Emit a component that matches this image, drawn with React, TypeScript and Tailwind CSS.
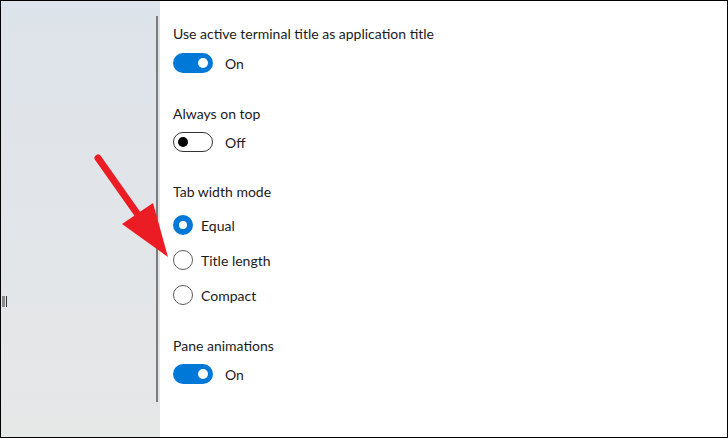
import React from 'react';

const font = { fontFamily: 'Lato, "Noto Sans", sans-serif' };

const Toggle = ({ on }: { on: boolean }) => (
  <div className="flex h-[20px] items-center">
    {on ? (
      <div className="flex h-[20px] w-[40px] items-center justify-end rounded-full bg-[#0078d7] pr-[5px]">
        <div className="h-[10px] w-[10px] rounded-full bg-white" />
      </div>
    ) : (
      <div className="flex h-[20px] w-[40px] items-center rounded-full border-[1.5px] border-[#333333] pl-[4px]">
        <div className="h-[10px] w-[10px] rounded-full bg-black" />
      </div>
    )}
    <span className="ml-[12px] text-[14px] text-[#1b1b1b]">{on ? 'On' : 'Off'}</span>
  </div>
);

const Radio = ({ label, checked }: { label: string; checked?: boolean }) => (
  <div className="flex h-[20px] items-center">
    {checked ? (
      <div className="flex h-[20px] w-[20px] items-center justify-center rounded-full bg-[#0078d7]">
        <div className="h-[8px] w-[8px] rounded-full bg-white" />
      </div>
    ) : (
      <div className="h-[20px] w-[20px] rounded-full border border-[#5a5a5a]" />
    )}
    <span className="ml-[8px] text-[14px] text-[#1b1b1b]">{label}</span>
  </div>
);

const Title = ({ children }: { children: React.ReactNode }) => (
  <div className="flex h-[20px] items-center text-[14px] text-[#1b1b1b]">{children}</div>
);

export default function App() {
  return (
    <div
      className="relative flex h-[438px] w-[728px] overflow-hidden border border-black bg-white"
      style={font}
    >
      {/* left nav strip */}
      <div className="flex w-[159px] shrink-0 bg-gradient-to-b from-[#dde3ea] to-[#e6e7e7] pr-[2px]">
        <div className="flex flex-1 flex-col pl-[1px] pt-[295px]">
          <div className="flex h-[11px] items-stretch gap-[1px]">
            <div className="w-[3px] bg-[#8a8a8a]" />
            <div className="w-[1px] bg-[#333333]" />
          </div>
        </div>
        <div className="mt-[15px] h-[386px] w-[2px] bg-[#7b7b7b]" />
      </div>

      {/* settings */}
      <div className="flex flex-1 flex-col pl-[13px] pt-[22px]">
        <Title>Use active terminal title as application title</Title>
        <div className="mt-[10px]">
          <Toggle on />
        </div>

        <div className="mt-[30px]">
          <Title>Always on top</Title>
        </div>
        <div className="mt-[9px]">
          <Toggle on={false} />
        </div>

        <div className="mt-[29px]">
          <Title>Tab width mode</Title>
        </div>
        <div className="mt-[14px] flex flex-col gap-[15px]">
          <Radio label="Equal" checked />
          <Radio label="Title length" />
          <Radio label="Compact" />
        </div>

        <div className="mt-[30px]">
          <Title>Pane animations</Title>
        </div>
        <div className="mt-[9px]">
          <Toggle on />
        </div>
      </div>

      {/* annotation arrow */}
      <svg
        className="pointer-events-none absolute left-[-1px] top-[-1px]"
        width="728"
        height="438"
        viewBox="0 0 728 438"
      >
        <line x1="98" y1="158" x2="141" y2="219" stroke="#ec1c24" strokeWidth="7" strokeLinecap="round" />
        <polygon points="168,257 122,224 153,203" fill="#ec1c24" />
      </svg>
    </div>
  );
}
